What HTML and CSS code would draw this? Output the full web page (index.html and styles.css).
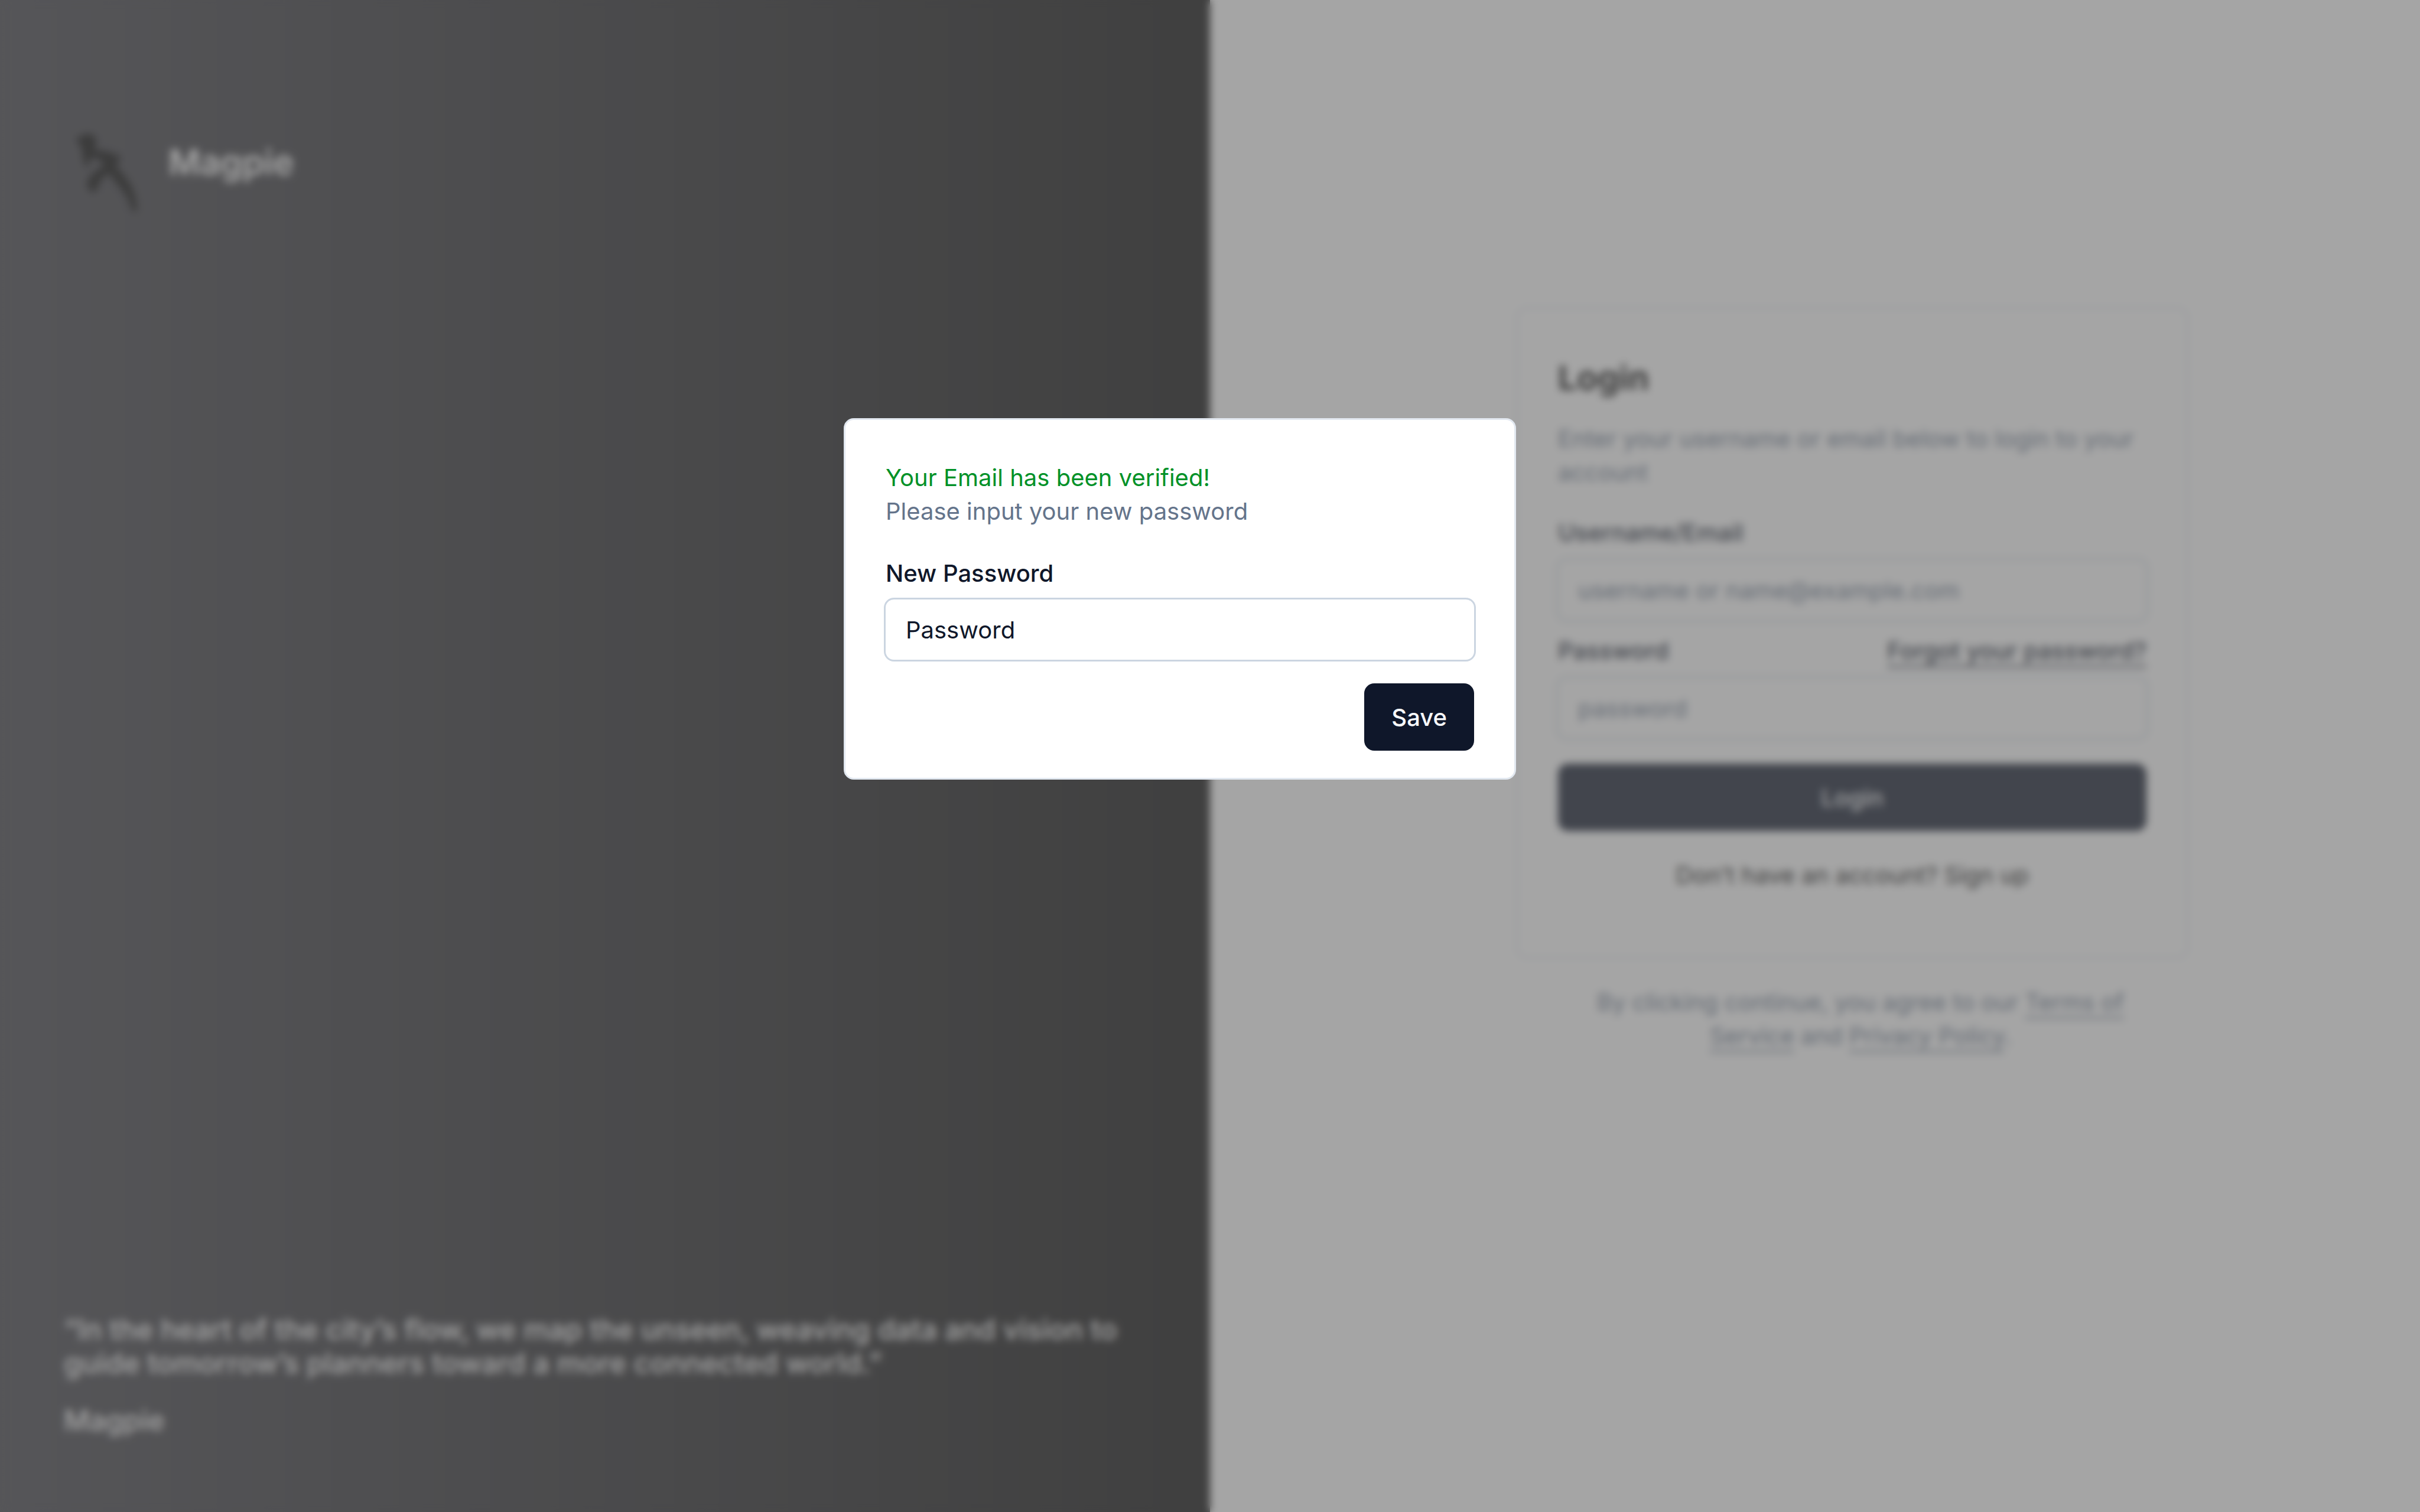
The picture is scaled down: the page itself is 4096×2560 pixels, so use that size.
FILE: index.html
```html
<!DOCTYPE html>
<html lang="en">
<head>
  <meta charset="utf-8">
  <meta name="viewport" content="width=device-width, initial-scale=1">
  <title>Magpie</title>
  <link rel="stylesheet" href="styles.css">
</head>
<body>
  <div class="page">
    <section class="brand-panel">
      <div class="brand">
        <svg class="brand-logo" viewBox="150 110 360 430" aria-hidden="true">
          <path class="logo-fill" d="M172 144 Q196 146 206 130 Q238 116 266 138 Q276 162 262 196 L242 250 L222 292 L210 240 L204 190 Z"/>
          <path class="logo-fill" d="M250 212 Q320 206 402 246 Q384 262 376 296 Q410 326 440 372 Q484 436 488 526 L472 526 Q458 460 416 412 Q376 366 350 326 Q320 330 292 366 Q286 396 264 426 Q238 420 232 384 Q244 344 282 318 Q318 306 320 270 Q290 244 250 238 Z"/>
        </svg>
        <h1 class="brand-name">Magpie</h1>
      </div>
      <blockquote class="quote">
        <p class="quote-text">“In the heart of the city’s flow, we map the unseen, weaving data and vision to guide tomorrow’s planners toward a more connected world.”</p>
        <footer class="quote-author">Magpie</footer>
      </blockquote>
    </section>

    <main class="login-panel">
      <form class="login-card">
        <h2 class="card-title">Login</h2>
        <p class="card-description">Enter your username or email below to login to your account</p>
        <div class="field">
          <label class="label" for="username">Username/Email</label>
          <input class="input" id="username" type="text" placeholder="username or name@example.com">
        </div>
        <div class="field">
          <div class="label-row">
            <label class="label" for="password">Password</label>
            <a class="label link" href="#">Forgot your password?</a>
          </div>
          <input class="input" id="password" type="password" placeholder="password">
        </div>
        <button class="button button-wide" type="button">Login</button>
        <p class="signup">Don’t have an account? <a class="signup-link" href="#">Sign up</a></p>
      </form>
      <p class="terms">By clicking continue, you agree to our <a class="link" href="#">Terms of Service</a> and <a class="link" href="#">Privacy Policy</a>.</p>
    </main>
  </div>

  <div class="overlay">
    <form class="dialog" role="dialog" aria-label="Set a new password">
      <p class="dialog-success">Your Email has been verified!</p>
      <p class="dialog-text">Please input your new password</p>
      <div class="field dialog-field">
        <label class="label" for="new-password">New Password</label>
        <input class="input input-strong" id="new-password" type="password" placeholder="Password">
      </div>
      <button class="button button-save" type="button">Save</button>
    </form>
  </div>
</body>
</html>
```
FILE: styles.css
```css
:root {
  --ink: #0f172a;
  --muted: #64748b;
  --line: #cbd5e1;
  --card-line: #e2e8f0;
  --success: #009127;
}

* {
  box-sizing: border-box;
  margin: 0;
}

body {
  font-family: Inter, "Liberation Sans", sans-serif;
  font-size: 40px;
  line-height: 57px;
  color: #0a0a0a;
  background: #fff;
}

.page {
  display: grid;
  grid-template-columns: 1fr 1fr;
  min-height: 100vh;
}

/* Brand side */

.brand-panel {
  display: flex;
  flex-direction: column;
  justify-content: space-between;
  padding: 224px 120px 127px 108px;
  color: #fff;
  background: linear-gradient(to right, #3f3f46, #0a0a0a);
}

.brand {
  display: flex;
  align-items: flex-start;
  gap: 48px;
  padding-left: 15px;
}

.brand-logo {
  width: 114px;
  height: 136px;
}

.logo-fill {
  fill: #000;
  stroke: #000;
  stroke-width: 12;
  stroke-linejoin: round;
}

.brand-name {
  font-size: 59px;
  font-weight: 600;
  line-height: 102px;
}

.quote {
  display: flex;
  flex-direction: column;
  gap: 40px;
  font-size: 48px;
  font-weight: 500;
}

/* Login side */

.login-panel {
  display: flex;
  flex-direction: column;
  gap: 45px;
  padding: 520px 0 120px 518px;
}

.login-card {
  display: flex;
  flex-direction: column;
  width: 1138px;
  padding: 88px 68px 110px;
  border: 3px solid var(--card-line);
  border-radius: 17px;
}

.card-title {
  margin-bottom: 46px;
  font-size: 57px;
  font-weight: 700;
}

.card-description {
  margin-bottom: 54px;
  color: var(--muted);
}

.field {
  display: flex;
  flex-direction: column;
  gap: 26px;
  margin-bottom: 32px;
}

.label-row {
  display: flex;
  justify-content: space-between;
}

.label {
  font-weight: 500;
  line-height: 40px;
  color: var(--ink);
}

.link {
  color: inherit;
  text-decoration: underline;
  text-decoration-thickness: 3px;
  text-underline-offset: 11px;
}

.label.link {
  color: var(--ink);
}

.input {
  width: 100%;
  height: 102px;
  padding: 0 34px;
  border: 0;
  border-radius: 14px;
  box-shadow: 0 0 0 3px var(--line);
  background: #fff;
  font: inherit;
  color: var(--ink);
}

.input::placeholder {
  color: var(--muted);
  opacity: 1;
}

.input-strong::placeholder {
  color: var(--ink);
}

.button {
  height: 114px;
  padding: 0 46px;
  border: 0;
  border-radius: 17px;
  background: var(--ink);
  font: inherit;
  font-weight: 500;
  color: #f8fafc;
}

.button-wide {
  margin-top: 11px;
}

.signup {
  margin-top: 46px;
  text-align: center;
}

.signup-link {
  color: inherit;
  text-decoration: none;
}

.terms {
  width: 1138px;
  padding: 0 91px 0 119px;
  text-align: center;
  color: var(--muted);
}

/* Dialog */

.overlay {
  position: fixed;
  inset: 0;
  padding: 708px 0 0 1428px;
  background: rgba(102, 102, 102, 0.5875);
  backdrop-filter: blur(7px);
}

.dialog {
  display: flex;
  flex-direction: column;
  width: 1138px;
  padding: 69px 68px 46px;
  border: 3px solid var(--card-line);
  border-radius: 17px;
  background: #fff;
}

.dialog-success {
  color: var(--success);
}

.dialog-text {
  margin-bottom: 57px;
  color: var(--muted);
}

.dialog-field {
  gap: 24px;
  margin-bottom: 40px;
}

.button-save {
  align-self: flex-end;
}
```
